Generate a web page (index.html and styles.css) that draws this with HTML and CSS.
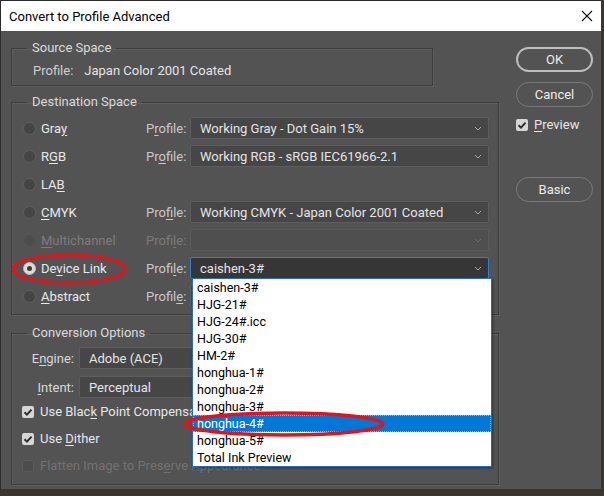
FILE: index.html
```html
<!DOCTYPE html>
<html>
<head>
<meta charset="utf-8">
<link rel="stylesheet" href="styles.css">
</head>
<body>
<div class="window">
  <div class="titlebar">
    <span class="title">Convert to Profile Advanced</span>
    <svg class="close" width="12" height="12" viewBox="0 0 12 12"><path d="M1 1 L11 11 M11 1 L1 11" stroke="#111" stroke-width="1.1" fill="none"/></svg>
  </div>
  <div class="content">
    <div class="main">
      <fieldset class="group source">
        <legend>Source Space</legend>
        <div class="source-row"><span class="dim">Profile:</span><span>Japan Color 2001 Coated</span></div>
      </fieldset>

      <fieldset class="group dest">
        <legend>Destination Space</legend>
        <div class="dest-grid">
          <div class="radio-cell"><span class="radio"></span><span>Gra<u>y</u></span></div>
          <span class="plabel">P<u>r</u>ofile:</span>
          <div class="select"><span>Working Gray - Dot Gain 15%</span><svg class="chev" width="8" height="5" viewBox="0 0 8 5"><path d="M1 1 L4 4 L7 1" stroke="#a8a8a8" fill="none"/></svg></div>

          <div class="radio-cell"><span class="radio"></span><span>R<u>G</u>B</span></div>
          <span class="plabel">Pr<u>o</u>file:</span>
          <div class="select"><span>Working RGB - sRGB IEC61966-2.1</span><svg class="chev" width="8" height="5" viewBox="0 0 8 5"><path d="M1 1 L4 4 L7 1" stroke="#a8a8a8" fill="none"/></svg></div>

          <div class="radio-cell"><span class="radio"></span><span>LA<u>B</u></span></div>
          <span></span>
          <span></span>

          <div class="radio-cell"><span class="radio"></span><span><u>C</u>MYK</span></div>
          <span class="plabel">Pro<u>f</u>ile:</span>
          <div class="select"><span>Working CMYK - Japan Color 2001 Coated</span><svg class="chev" width="8" height="5" viewBox="0 0 8 5"><path d="M1 1 L4 4 L7 1" stroke="#a8a8a8" fill="none"/></svg></div>

          <div class="radio-cell disabled"><span class="radio"></span><span><u>M</u>ultichannel</span></div>
          <span class="plabel disabled">Profi<u>l</u>e:</span>
          <div class="select disabled"><span></span><svg class="chev" width="8" height="5" viewBox="0 0 8 5"><path d="M1 1 L4 4 L7 1" stroke="#6a6a6a" fill="none"/></svg></div>

          <div class="radio-cell"><span class="radio on"></span><span>De<u>v</u>ice Link</span></div>
          <span class="plabel">Profi<u>l</u>e:</span>
          <div class="select focus"><span>caishen-3#</span><svg class="chev" width="8" height="5" viewBox="0 0 8 5"><path d="M1 1 L4 4 L7 1" stroke="#a8a8a8" fill="none"/></svg></div>

          <div class="radio-cell"><span class="radio"></span><span><u>A</u>bstract</span></div>
          <span class="plabel">Profil<u>e</u>:</span>
          <div class="select"><span></span><svg class="chev" width="8" height="5" viewBox="0 0 8 5"><path d="M1 1 L4 4 L7 1" stroke="#a8a8a8" fill="none"/></svg></div>
        </div>
      </fieldset>

      <fieldset class="group conv">
        <legend>Conversion Options</legend>
        <div class="conv-grid">
          <span class="clabel">E<u>n</u>gine:</span>
          <div class="select short"><span>Adobe (ACE)</span></div>
          <span class="clabel"><u>I</u>ntent:</span>
          <div class="select short"><span>Perceptual</span></div>
        </div>
        <div class="checks">
          <div class="check-row"><span class="cbox checked"><svg width="12" height="12" viewBox="0 0 12 12"><path d="M2.5 6.2 L5 8.6 L9.5 3.6" stroke="#2e2e2e" stroke-width="2" fill="none"/></svg></span><span>Use Blac<u>k</u> Point Compensation</span></div>
          <div class="check-row"><span class="cbox checked"><svg width="12" height="12" viewBox="0 0 12 12"><path d="M2.5 6.2 L5 8.6 L9.5 3.6" stroke="#2e2e2e" stroke-width="2" fill="none"/></svg></span><span>Use <u>D</u>ither</span></div>
          <div class="check-row disabled"><span class="cbox off"></span><span>Flatten Image to Pres<u>e</u>rve Appearance</span></div>
        </div>
      </fieldset>
    </div>

    <div class="side">
      <div class="btn default">OK</div>
      <div class="btn">Cancel</div>
      <div class="check-row preview"><span class="cbox checked"><svg width="12" height="12" viewBox="0 0 12 12"><path d="M2.5 6.2 L5 8.6 L9.5 3.6" stroke="#2e2e2e" stroke-width="2" fill="none"/></svg></span><span><u>P</u>review</span></div>
      <div class="btn basic">Basic</div>
    </div>
  </div>

  <ul class="listbox">
    <li>caishen-3#</li>
    <li>HJG-21#</li>
    <li>HJG-24#.icc</li>
    <li>HJG-30#</li>
    <li>HM-2#</li>
    <li>honghua-1#</li>
    <li>honghua-2#</li>
    <li>honghua-3#</li>
    <li class="sel">honghua-4#</li>
    <li>honghua-5#</li>
    <li>Total Ink Preview</li>
  </ul>

  <svg class="marks" width="600" height="488" viewBox="0 0 600 488">
    <ellipse cx="68" cy="268" rx="56" ry="14" fill="none" stroke="#e5121a" stroke-width="3"/>
    <ellipse cx="283" cy="423" rx="99" ry="11" fill="none" stroke="#e5121a" stroke-width="3.5"/>
  </svg>
</div>
</body>
</html>
```
FILE: styles.css
```css
html, body {
  margin: 0;
  padding: 0;
}
body {
  background: #3b3532;
  width: 604px;
  height: 496px;
  overflow: hidden;
  font-family: Roboto, "Noto Sans", "DejaVu Sans", sans-serif;
  font-size: 13px;
  color: #e4e4e4;
}
u {
  text-decoration: underline;
  text-underline-offset: 2px;
}
.window {
  position: relative;
  width: 600px;
  height: 488px;
  background: #535353;
  border-top: 1px solid #2b2b2b;
  border-left: 1px solid #2b2b2b;
}
.titlebar {
  height: 30px;
  background: #ffffff;
  display: flex;
  align-items: center;
  justify-content: space-between;
  padding: 0 8px 0 8px;
}
.title {
  color: #000;
  font-size: 13px;
}
.close {
  margin-right: 0;
}
.content {
  display: flex;
  padding: 9px 0 0 10px;
  gap: 17px;
}
.main {
  width: 488px;
  display: flex;
  flex-direction: column;
}
.group {
  margin: 0;
  padding: 0;
  border: 1px solid #3d3d3d;
  box-shadow: 1px 1px 0 #5f5f5f, inset 1px 1px 0 #5f5f5f;
  min-width: 0;
}
.group legend {
  margin-left: 15px;
  padding: 0 5px;
  line-height: 16px;
  color: #dadada;
}
.source {
  width: 422px;
  box-sizing: border-box;
}
.source-row {
  display: flex;
  gap: 11px;
  padding: 7px 0 6px 21px;
  line-height: 16px;
}
.dim {
  color: #cfcfcf;
}
.dest {
  margin-top: 8px;
}
.dest-grid {
  display: grid;
  grid-template-columns: 123px 44px 299px;
  grid-auto-rows: 22px;
  row-gap: 6px;
  padding: 7px 8px 7px 11px;
  align-items: center;
}
.radio-cell {
  display: flex;
  align-items: center;
  gap: 5px;
  color: #e8e8e8;
}
.radio {
  width: 11px;
  height: 11px;
  border-radius: 50%;
  background: #454545;
  border: 1px solid #5e5e5e;
  position: relative;
  flex: none;
}
.radio.on {
  background: #dcdcdc;
  border-color: #bdbdbd;
}
.radio.on::after {
  content: "";
  position: absolute;
  left: 3px;
  top: 3px;
  width: 5px;
  height: 5px;
  border-radius: 50%;
  background: #3a3a3a;
}
.radio-cell.disabled {
  color: #7c7c7c;
}
.radio-cell.disabled .radio {
  background: #4c4c4c;
  border-color: #575757;
}
.plabel {
  color: #c8c8c8;
}
.plabel.disabled {
  color: #7a7a7a;
}
.select {
  height: 22px;
  box-sizing: border-box;
  border: 1px solid #5d5d5d;
  background: #464646;
  border-radius: 2px;
  display: flex;
  align-items: center;
  justify-content: space-between;
  padding: 0 6px 0 9px;
  color: #e4e4e4;
}
.select.disabled {
  background: #4f4f4f;
  border-color: #5b5b5b;
}
.select.focus {
  background: #363636;
  border-color: #2f7fd8;
}
.chev {
  flex: none;
}
.conv {
  margin-top: 10px;
}
.conv-grid {
  display: grid;
  grid-template-columns: 62px 260px;
  grid-auto-rows: 22px;
  row-gap: 7px;
  column-gap: 5px;
  padding: 6px 0 0 0;
  align-items: center;
}
.clabel {
  text-align: right;
  color: #d8d8d8;
}
.select.short {
  padding-left: 9px;
}
.checks {
  display: flex;
  flex-direction: column;
  gap: 11px;
  padding: 6px 0 10px 10px;
}
.check-row {
  display: flex;
  align-items: center;
  gap: 6px;
  line-height: 16px;
  color: #e6e6e6;
}
.check-row.disabled {
  color: #727272;
}
.cbox {
  width: 12px;
  height: 12px;
  border-radius: 2px;
  background: #d6d6d6;
  display: flex;
  flex: none;
}
.cbox.off {
  background: #4d4d4d;
  box-shadow: inset 0 0 0 1px #5a5a5a;
}
.side {
  width: 77px;
  padding-top: 7px;
  display: flex;
  flex-direction: column;
}
.btn {
  height: 25px;
  box-sizing: border-box;
  border: 1px solid #7a7a7a;
  border-radius: 13px;
  display: flex;
  align-items: center;
  justify-content: center;
  color: #ececec;
  margin-bottom: 10px;
}
.btn.default {
  border: 2px solid #bdbdbd;
}
.preview {
  margin-top: 0;
  margin-bottom: 0;
}
.basic {
  margin-top: 44px;
}
.listbox {
  position: absolute;
  left: 191px;
  top: 277px;
  width: 298px;
  margin: 0;
  padding: 0;
  list-style: none;
  background: #ffffff;
  border: 1px solid #1f6fc8;
  box-shadow: 1px 1px 2px rgba(0,0,0,0.4);
  font-size: 12.5px;
  color: #000;
}
.listbox li {
  height: 17px;
  line-height: 17px;
  padding-left: 4px;
  box-sizing: border-box;
}
.listbox li.sel {
  background: #0078d7;
  color: #fff;
  outline: 1px dotted #f0a040;
  outline-offset: -1px;
}
.marks {
  position: absolute;
  left: 0;
  top: 0;
  pointer-events: none;
}
```
